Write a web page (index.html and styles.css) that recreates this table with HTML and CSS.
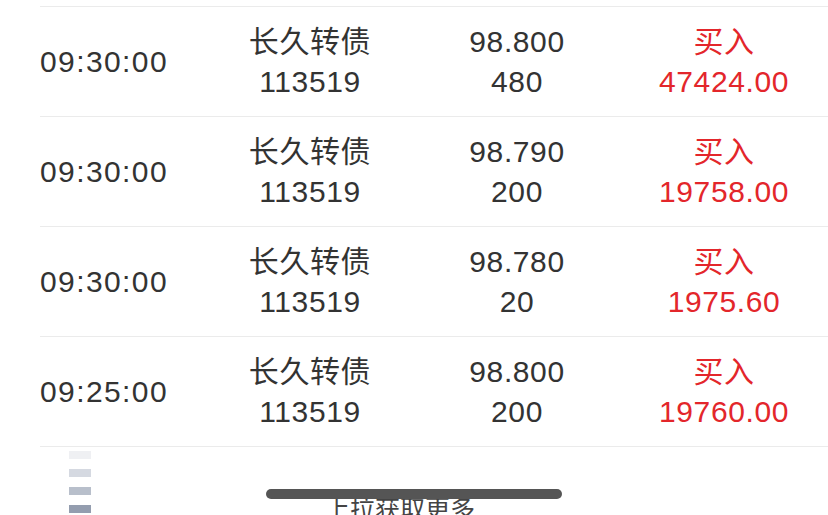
FILE: index.html
```html
<!DOCTYPE html>
<html lang="zh-CN">
<head>
<meta charset="utf-8">
<link rel="stylesheet" href="styles.css">
</head>
<body>
<div class="list">
  <div class="row">
    <div class="time">09:30:00</div>
    <div class="cell"><span>长久转债</span><span>113519</span></div>
    <div class="cell"><span>98.800</span><span>480</span></div>
    <div class="cell red"><span>买入</span><span>47424.00</span></div>
  </div>
  <div class="row">
    <div class="time">09:30:00</div>
    <div class="cell"><span>长久转债</span><span>113519</span></div>
    <div class="cell"><span>98.790</span><span>200</span></div>
    <div class="cell red"><span>买入</span><span>19758.00</span></div>
  </div>
  <div class="row">
    <div class="time">09:30:00</div>
    <div class="cell"><span>长久转债</span><span>113519</span></div>
    <div class="cell"><span>98.780</span><span>20</span></div>
    <div class="cell red"><span>买入</span><span>1975.60</span></div>
  </div>
  <div class="row last">
    <div class="time">09:25:00</div>
    <div class="cell"><span>长久转债</span><span>113519</span></div>
    <div class="cell"><span>98.800</span><span>200</span></div>
    <div class="cell red"><span>买入</span><span>19760.00</span></div>
  </div>
</div>
<div class="footer">
  <div class="loader">
    <i class="b1"></i><i class="b2"></i><i class="b3"></i><i class="b4"></i>
  </div>
  <div class="more">上拉获取更多</div>
</div>
<div class="home-indicator"></div>
</body>
</html>
```

FILE: styles.css
```css
html, body {
  margin: 0;
  padding: 0;
  background: #ffffff;
  width: 828px;
  height: 515px;
  overflow: hidden;
}
body {
  font-family: "Liberation Sans", "Noto Sans CJK SC", sans-serif;
  color: #333333;
  position: relative;
}
.list {
  padding-top: 6px;
  margin-left: 40px;
}
.row {
  display: grid;
  grid-template-columns: 170px 200px 214px 200px;
  align-items: center;
  height: 109px;
  border-top: 1px solid #ebebeb;
}
.row.last {
  border-bottom: 1px solid #ebebeb;
}
.time {
  font-size: 30px;
  letter-spacing: 1.4px;
  padding-top: 1px;
}
.cell {
  display: flex;
  flex-direction: column;
  align-items: center;
  font-size: 30px;
  line-height: 40px;
  letter-spacing: 0.6px;
  padding-top: 1px;
}
.red {
  color: #e3262b;
}
.footer {
  display: flex;
  align-items: flex-start;
  padding-left: 69px;
  padding-top: 4px;
}
.loader {
  display: flex;
  flex-direction: column;
  gap: 10px;
}
.loader i {
  display: block;
  width: 22px;
  height: 8px;
}
.b1 { background: #eff0f3; }
.b2 { background: #d5d9e1; }
.b3 { background: #b8bfcb; }
.b4 { background: #949daf; }
.more {
  margin-left: 234px;
  margin-top: 41px;
  font-family: "Noto Sans CJK SC", sans-serif;
  font-size: 25px;
  line-height: 30px;
  color: #444444;
}
.home-indicator {
  position: absolute;
  left: 266px;
  top: 489px;
  width: 296px;
  height: 10px;
  border-radius: 5px;
  background: #555555;
}
```
